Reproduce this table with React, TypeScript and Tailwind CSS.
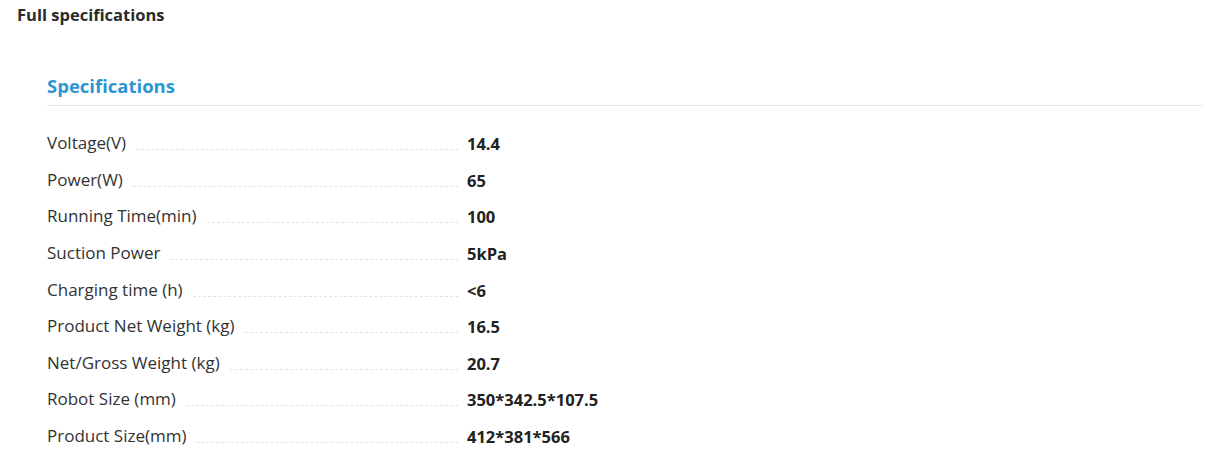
const specs = [
  ["Voltage(V)", "14.4"],
  ["Power(W)", "65"],
  ["Running Time(min)", "100"],
  ["Suction Power", "5kPa"],
  ["Charging time (h)", "<6"],
  ["Product Net Weight (kg)", "16.5"],
  ["Net/Gross Weight (kg)", "20.7"],
  ["Robot Size (mm)", "350*342.5*107.5"],
  ["Product Size(mm)", "412*381*566"],
];

export default function App() {
  return (
    <main className="min-h-screen bg-white text-[#333] font-['Open_Sans','Lato',sans-serif]">
      <h1 className="pl-[17px] pt-[5px] text-[16.5px] font-bold leading-[20px] text-[#2b2b2b]">
        Full specifications
      </h1>
      <div className="pl-[47px] pr-[8px] pt-[49px]">
        <div className="border-b border-[#e6e6e6] pb-[7px]">
          <h2 className="text-[18.5px] font-bold leading-[24px] text-[#2e95d3]">Specifications</h2>
        </div>
        <div className="pt-[19px]">
          {specs.map(([label, value]) => (
            <div key={label} className="flex h-[36.6px] items-center">
              <div className="flex w-[420px] items-end">
                <span className="text-[17px] leading-[20px] text-[#333]">{label}</span>
                <span className="mb-[3px] ml-[10px] mr-[9px] flex-1 border-b border-dashed border-[#e3e3e3]" />
              </div>
              <span className="pt-[2px] text-[16.5px] font-bold leading-[20px] text-[#222]">{value}</span>
            </div>
          ))}
        </div>
      </div>
    </main>
  );
}
